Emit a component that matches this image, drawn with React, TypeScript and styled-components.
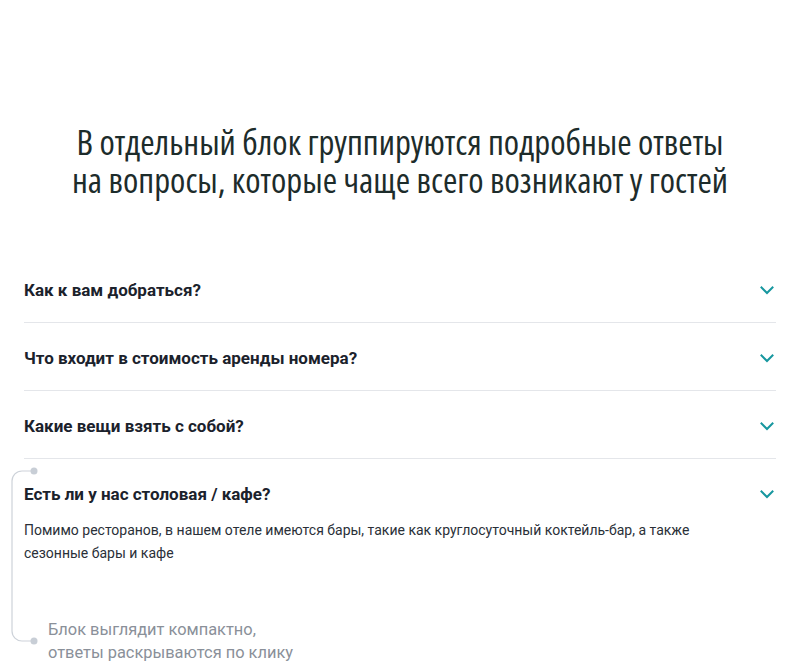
import React, { useState } from 'react'
import styled, { createGlobalStyle } from 'styled-components'

const GlobalStyle = createGlobalStyle`
  html, body {
    margin: 0;
    padding: 0;
    background: #ffffff;
  }
  body {
    font-family: Roboto, 'Noto Sans', Arial, sans-serif;
    -webkit-font-smoothing: antialiased;
  }
  * {
    box-sizing: border-box;
  }
`

const Page = styled.div`
  width: 800px;
  height: 663px;
  overflow: hidden;
  padding: 123px 24px 0;
`

const Title = styled.h1`
  margin: 0 0 56px;
  font-family: 'Open Sans', 'DejaVu Sans Condensed', sans-serif;
  font-stretch: 75%;
  font-weight: 400;
  font-size: 34.8px;
  line-height: 38px;
  color: #1d2c2b;
  text-align: center;
`

const List = styled.div`
  display: flex;
  flex-direction: column;
`

const Item = styled.div<{ $last?: boolean }>`
  border-bottom: ${(p) => (p.$last ? 'none' : '1px solid #e4e6ea')};
`

const Question = styled.button`
  display: flex;
  align-items: center;
  justify-content: space-between;
  width: 100%;
  padding: 25px 0 22px;
  border: none;
  background: none;
  cursor: pointer;
  font-family: Roboto, 'Noto Sans', sans-serif;
  font-weight: 700;
  font-size: 17px;
  line-height: 20px;
  color: #1b222c;
  text-align: left;
`

const Chevron = styled.svg`
  flex: none;
  margin-right: 2px;
`

const Answer = styled.p`
  margin: -7px 0 0;
  font-size: 14px;
  line-height: 23px;
  color: #2a3038;
  max-width: 720px;
`

const OpenGroup = styled.div`
  position: relative;
`

// grey bracket with two dots that ties the open item to the note under it
const Bracket = styled.svg`
  position: absolute;
  left: -24px;
  top: 6px;
  pointer-events: none;
`

const Note = styled.p`
  margin: 53px 0 0;
  padding-left: 24px;
  font-size: 16.4px;
  line-height: 23px;
  color: #8a9099;
`

const faq = [
  { q: 'Как к вам добраться?', a: '' },
  { q: 'Что входит в стоимость аренды номера?', a: '' },
  { q: 'Какие вещи взять с собой?', a: '' },
  {
    q: 'Есть ли у нас столовая / кафе?',
    a: 'Помимо ресторанов, в нашем отеле имеются бары, такие как круглосуточный коктейль-бар, а также сезонные бары и кафе',
  },
]

function Arrow() {
  return (
    <Chevron width="14" height="9" viewBox="0 0 14 9" fill="none">
      <path
        d="M1.5 1.5L7 7L12.5 1.5"
        stroke="#17979f"
        strokeWidth="2"
        strokeLinecap="square"
      />
    </Chevron>
  )
}

export default function App() {
  const [open, setOpen] = useState(3)

  const renderItem = (i: number, last?: boolean) => (
    <Item key={i} $last={last}>
      <Question onClick={() => setOpen(open === i ? -1 : i)}>
        {faq[i].q}
        <Arrow />
      </Question>
      {open === i && faq[i].a && <Answer>{faq[i].a}</Answer>}
    </Item>
  )

  return (
    <>
      <GlobalStyle />
      <Page>
        <Title>
          В отдельный блок группируются подробные ответы
          <br />
          на вопросы, которые чаще всего возникают у гостей
        </Title>
        <List>
          {renderItem(0)}
          {renderItem(1)}
          {renderItem(2)}
          <OpenGroup>
            {renderItem(3, true)}
            <Note>
              Блок выглядит компактно,
              <br />
              ответы раскрываются по клику
            </Note>
            <Bracket width="40" height="184" viewBox="0 0 40 184" fill="none">
              <path
                d="M34 6H22C16.5 6 12 10.5 12 16V166C12 171.5 16.5 176 22 176H34"
                stroke="#cdd2d9"
                strokeWidth="1.2"
              />
              <circle cx="34" cy="6" r="3.5" fill="#c8ced6" />
              <circle cx="34" cy="176" r="3.5" fill="#c8ced6" />
            </Bracket>
          </OpenGroup>
        </List>
      </Page>
    </>
  )
}
